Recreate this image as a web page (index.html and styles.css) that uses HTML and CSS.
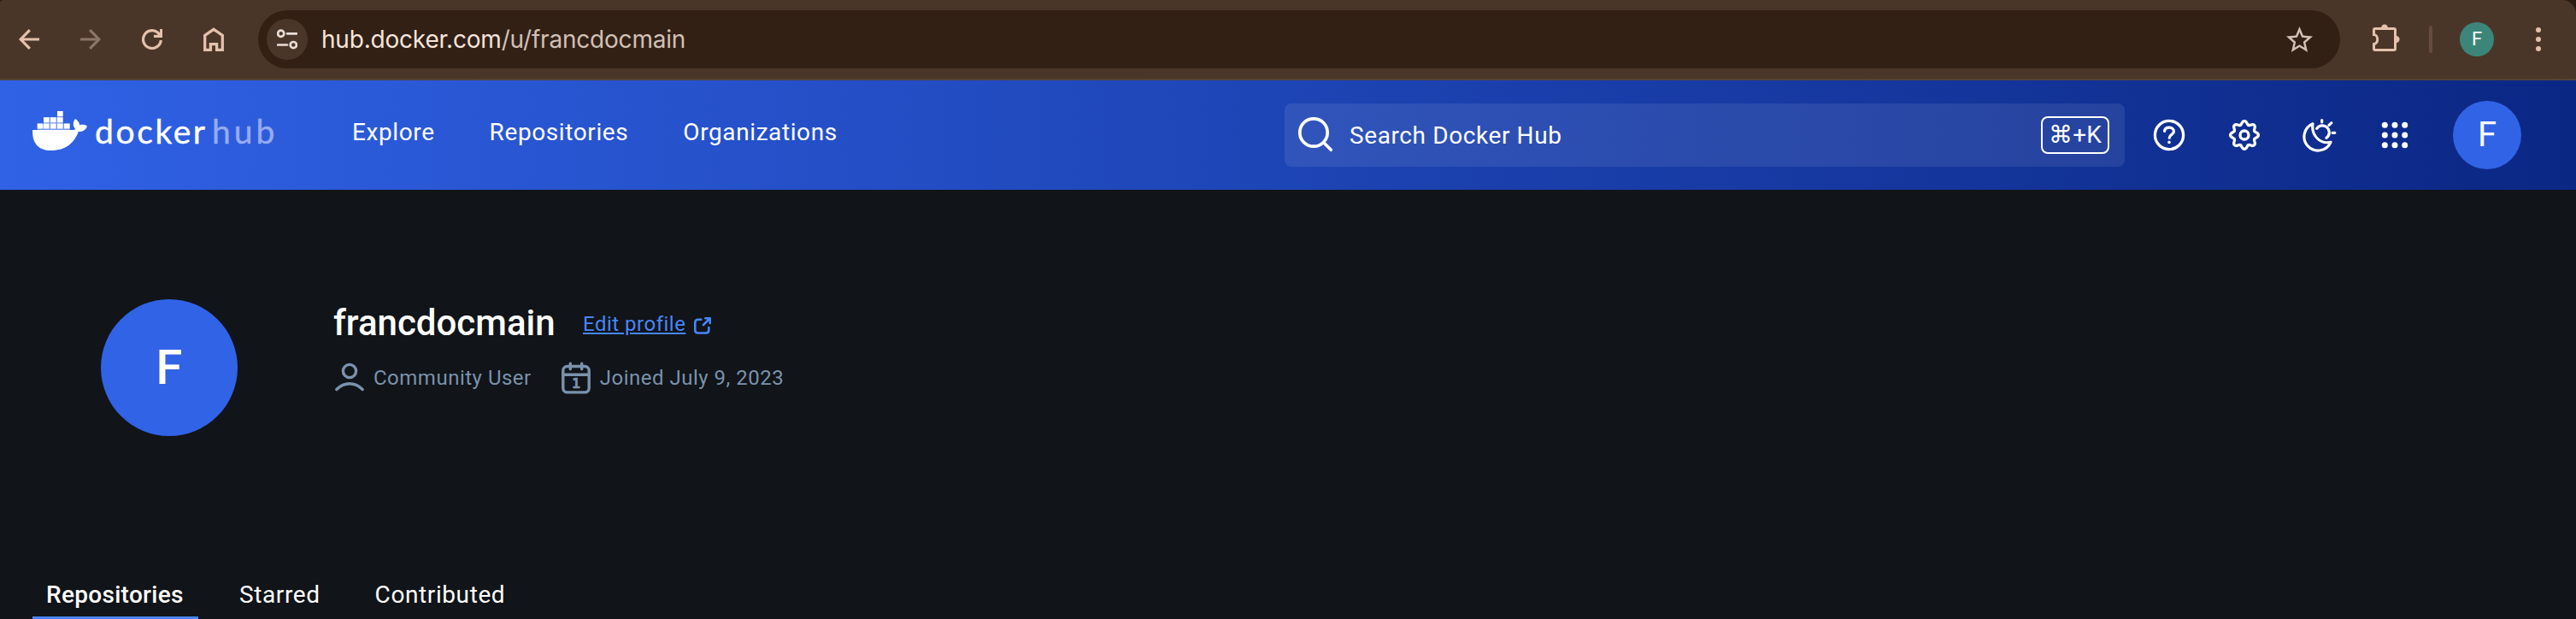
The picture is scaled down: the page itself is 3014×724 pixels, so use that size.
FILE: index.html
```html
<!DOCTYPE html>
<html lang="en">
<head>
<meta charset="utf-8">
<title>francdocmain | Docker Hub</title>
<link rel="stylesheet" href="styles.css">
</head>
<body>
<div class="browser">
  <div class="toolbar">
    <div class="nav-buttons">
      <svg class="icon" width="24" height="24" viewBox="0 0 24 24"><path d="M24 12H2.500M12.800 1.200 2.200 12l10.600 10.800" stroke-width="3.200"/></svg>
      <svg class="icon icon-dim" width="24" height="24" viewBox="0 0 24 24"><path d="M0 12h21.500M11.200 1.200 21.800 12 11.200 22.800" stroke-width="3.200"/></svg>
      <svg class="icon" width="24" height="24" viewBox="0 0 24 24"><path d="M22.300 13A10.400 10.400 0 1 1 18.500 4L22 7.500M22.600 0v8.300H14" stroke-width="3.200"/></svg>
      <svg class="icon" width="24" height="28" viewBox="0 0 24 28"><path d="M1.700 26.300V9.300L12 2.300l10.300 7v17h-6.700v-6.700H8.400v6.700z" stroke-width="3.300"/></svg>
    </div>
    <div class="address">
      <span class="site-info">
        <svg class="icon icon-light" width="24" height="24" viewBox="0 0 24 24" stroke-width="2.700"><circle cx="4.700" cy="5.300" r="3.600"/><path d="M12 5.300h11M1 18.500h11"/><circle cx="19.300" cy="18.600" r="3.600"/></svg>
      </span>
      <span class="url"><span class="host">hub.docker.com</span>/u/francdocmain</span>
      <svg class="star" width="31" height="30" viewBox="2 2 20 19" preserveAspectRatio="none"><path d="M22 9.240l-7.190-.620L12 2 9.190 8.630 2 9.240l5.460 4.730L5.820 21 12 17.270 18.180 21l-1.630-7.030L22 9.240zM12 15.400l-3.760 2.270 1-4.280-3.320-2.880 4.380-.380L12 6.100l1.710 4.040 4.380.380-3.320 2.880 1 4.280L12 15.400z"/></svg>
    </div>
    <svg class="icon puzzle" width="32" height="32" viewBox="0 0 32 32"><path d="M1.500 12.500V7q0-1.500 1.500-1.500h22q1.500 0 1.500 1.500v22q0 1.500-1.500 1.500H3q-1.500 0-1.500-1.500v-5.500A4.200 5.500 0 0 0 1.500 12.500z" stroke-width="3"/><path class="solid" d="M10 5a4 4.600 0 0 1 8 0zM27 13.800a4.600 4.200 0 0 1 0 8.400z"/></svg>
    <span class="divider"></span>
    <span class="chrome-avatar">F</span>
    <span class="kebab"><i></i><i></i><i></i></span>
  </div>
</div>

<header class="hub-header">
  <a class="brand">
    <svg class="whale" width="64" height="46" viewBox="0 0 64 46">
      <path class="cargo-gap" d="M29 0h6.700v7H29zM13 7h22.700v7.500H13zM5.700 14.500h38v8h-38z"/>
      <path d="M29 0h6.600v5.900H29zM13 7.300h6.600v5.900H13zM21 7.300h6.600v5.900H21zM29 7.300h6.600v5.900H29zM5.700 14.600h6.600v5.900H5.700zM13 14.600h6.600v5.900H13zM21 14.600h6.600v5.900H21zM29 14.600h6.600v5.900H29zM37 14.600h6.600v5.900H37z"/>
      <path d="M1 22h45c2.500 0 3.800-.400 4.400-1C47 18 47 12.500 50 9c2.500 1.500 5 4 5.200 7.200 3.300-1 6.800-.400 8.800 1.200-1.500 4.600-5 6.600-10.200 6.600C49 37 39 46 22 46 7 46 0 38 0 23q0-1 1-1z"/>
    </svg>
    <span class="word">docker</span><span class="word word-hub">hub</span>
  </a>
  <nav class="main-nav"><a>Explore</a><a>Repositories</a><a>Organizations</a></nav>
  <div class="search">
    <svg class="line" width="42" height="42" viewBox="0 0 42 42" stroke-width="3.700"><circle cx="18" cy="18" r="16.200"/><path d="m29.500 29.500 8.800 8.800"/></svg>
    <span class="search-text">Search Docker Hub</span>
    <kbd>⌘+K</kbd>
  </div>
  <div class="actions">
    <svg class="line" width="40" height="40" viewBox="-20 -20 40 40" stroke-width="3.300"><circle r="16.600"/><path d="M-5.400-4.600C-5.200-7.300-2.900-8.900 0-8.900 3.100-8.900 5.500-7 5.500-4.200 5.500-.600.200-.700.200 3.200"/><circle class="dot" cx="0" cy="8.400" r="1.800"/></svg>
    <svg class="line" width="40" height="40" viewBox="-20 -20 40 40" stroke-width="3.300">
      <defs><path id="tooth" d="M-4.820-11.640C-2.500-12.600-3.300-16.400 0-16.400S2.500-12.600 4.820-11.640"/></defs>
      <use href="#tooth"/><use href="#tooth" transform="rotate(45)"/><use href="#tooth" transform="rotate(90)"/><use href="#tooth" transform="rotate(135)"/><use href="#tooth" transform="rotate(180)"/><use href="#tooth" transform="rotate(225)"/><use href="#tooth" transform="rotate(270)"/><use href="#tooth" transform="rotate(315)"/>
      <circle r="5"/>
    </svg>
    <svg class="line" width="40" height="40" viewBox="0 0 40 40" stroke-width="3.200"><path d="M12 6.800A16.200 16.200 0 1 0 33 28.300C20 31 10 20 12 6.800zM16.700 12.300A8 8 0 1 1 28 23.300M22.700 2.600v2.200M31 8.400l2.800-2.600M35 17.300h2.800"/></svg>
    <svg class="dots" width="32" height="32" viewBox="-16 -16 32 32"><g><circle cx="-11.700" cy="-11.700" r="3.500"/><circle cy="-11.700" r="3.500"/><circle cx="11.700" cy="-11.700" r="3.500"/><circle cx="-11.700" r="3.500"/><circle r="3.500"/><circle cx="11.700" r="3.500"/><circle cx="-11.700" cy="11.700" r="3.500"/><circle cy="11.700" r="3.500"/><circle cx="11.700" cy="11.700" r="3.500"/></g></svg>
    <span class="user-avatar">F</span>
  </div>
</header>

<main class="page">
  <section class="profile">
    <div class="avatar">F</div>
    <div class="details">
      <div class="title-row">
        <h1>francdocmain</h1>
        <a class="edit"><span>Edit profile</span>
          <svg width="20" height="20" viewBox="0 0 20 20"><path d="M8.300 2.800H4.800q-3.500 0-3.500 3.400v9q0 3.300 3.500 3.300H14q3.300 0 3.300-3.300V12M11 9l7.500-7.500M13.300 1.300h5.500v5.600"/></svg>
        </a>
      </div>
      <div class="meta-row">
        <span class="meta"><svg class="meta-icon" width="36" height="36" viewBox="0 0 36 36"><circle cx="18" cy="10" r="7.600"/><path d="M2.800 31.500C12 22.500 24 22.500 33.200 31.500"/></svg><span class="member">Community User</span></span>
        <span class="meta"><svg class="meta-icon" width="36" height="38" viewBox="0 0 36 38"><rect x="2.800" y="5.500" width="30.400" height="30.400" rx="5"/><path d="M2.800 15.300h30.400M11.300 2.300v6.500M24.700 2.300v6.500"/><text x="18" y="31">1</text></svg><span>Joined July 9, 2023</span></span>
      </div>
    </div>
  </section>
  <nav class="tabs"><a class="tab active">Repositories</a><a class="tab starred">Starred</a><a class="tab contributed">Contributed</a></nav>
</main>
</body>
</html>
```

FILE: styles.css
```css
* { box-sizing: border-box; }
html, body { margin: 0; height: 724px; overflow: hidden; }
body {
  background: #111418;
  color: #fff;
  font-family: Roboto, "Liberation Sans", sans-serif;
  font-size: 28px;
  letter-spacing: 0.6px;
  -webkit-font-smoothing: antialiased;
}
svg { display: block; flex: none; fill: none; }

.browser { background: #2c1b10; }
.toolbar {
  display: flex;
  align-items: center;
  height: 94px;
  padding-left: 22px;
  background: #4a3628;
  border-bottom: 2px solid #544338;
  border-radius: 4px 16px 0 0;
}
.nav-buttons { display: flex; align-items: center; gap: 48px; width: 280px; }
.icon { stroke: #e3c1ac; }
.icon-dim { stroke: #8d7667; }
.icon-light { stroke: #eaddd5; stroke-linecap: round; }
.address {
  display: flex;
  align-items: center;
  width: 2436px;
  height: 68px;
  padding: 0 32px 0 10px;
  border-radius: 34px;
  background: #322015;
}
.site-info {
  display: flex;
  align-items: center;
  justify-content: center;
  width: 48px;
  height: 48px;
  border-radius: 50%;
  background: #4a3628;
}
.url {
  flex: 1;
  margin-left: 16px;
  color: #d1c0b6;
  font: 400 28px/40px Inter, "Liberation Sans", sans-serif;
  letter-spacing: -0.2px;
}
.host { color: #f4e4da; }
.star { fill: #d1c0b6; }
.puzzle { margin: -4px 0 0 38px; }
.puzzle .solid { fill: #e3c1ac; stroke: none; }
.divider { width: 4px; height: 32px; margin-left: 34px; border-radius: 2px; background: #654c3e; }
.chrome-avatar {
  width: 40px;
  height: 40px;
  margin-left: 32px;
  border-radius: 50%;
  background: #3b8679;
  font-size: 22px;
  line-height: 40px;
  text-align: center;
  letter-spacing: 0;
}
.kebab { display: flex; flex-direction: column; gap: 5px; margin-left: 49px; }
.kebab i { width: 6px; height: 6px; border-radius: 50%; background: #e3c1ac; }

.hub-header {
  display: flex;
  align-items: center;
  height: 128px;
  padding-left: 38px;
  background: linear-gradient(90deg, #3062e6, #0b2784);
}
.brand { display: flex; align-items: center; width: 374px; margin-top: -10px; }
.whale { fill: #fff; }
.cargo-gap { opacity: 0.35; }
.word {
  width: 138px;
  padding-left: 9px;
  font: 400 39px/46px Lato, sans-serif;
  letter-spacing: 2.6px;
  -webkit-text-stroke: 0.4px currentColor;
}
.word-hub { padding-left: 8px; color: #96abf0; letter-spacing: 4px; }
.main-nav { display: flex; gap: 64px; width: 1091px; margin-top: -7px; }
.search {
  display: flex;
  align-items: center;
  width: 983px;
  height: 74px;
  padding: 0 18px 0 16px;
  border-radius: 8px;
  background: rgba(255, 255, 255, 0.085);
}
.line { stroke: #fff; stroke-linecap: round; stroke-linejoin: round; }
.dot { fill: #fff; stroke: none; }
.search-text { flex: 1; margin-left: 18px; }
kbd {
  width: 80px;
  height: 44px;
  border: 2px solid #fff;
  border-radius: 8px;
  font: 400 28px/40px Roboto, "DejaVu Sans", sans-serif;
  letter-spacing: 0;
  text-align: center;
  white-space: nowrap;
}
.actions { display: flex; align-items: center; gap: 48px; margin-left: 32px; }
.dots { margin: 0 4px; fill: #fff; }
.user-avatar {
  width: 80px;
  height: 80px;
  border-radius: 50%;
  background: #3163e6;
  font-size: 40px;
  line-height: 80px;
  text-align: center;
  letter-spacing: 0;
}

.page { display: flex; flex-direction: column; height: 502px; }
.profile { display: flex; padding: 128px 0 0 118px; height: 444px; }
.avatar {
  width: 160px;
  height: 160px;
  border-radius: 50%;
  background: #3163e6;
  font-size: 56px;
  font-weight: 500;
  line-height: 160px;
  text-align: center;
  letter-spacing: 0;
}
.details { padding-left: 112px; }
.title-row { display: flex; align-items: center; height: 56px; }
h1 { width: 292px; margin: 0; font-size: 42px; font-weight: 500; line-height: 56px; letter-spacing: 0; }
.edit { display: flex; align-items: center; gap: 10px; height: 32px; margin-top: 2px; color: #4686fa; font-size: 24px; }
.edit span { letter-spacing: 0.5px; text-decoration: underline; }
.edit svg { margin-top: 4px; stroke: #4686fa; stroke-width: 2.6; stroke-linecap: round; stroke-linejoin: round; }
.meta-row { display: flex; align-items: center; gap: 33px; margin-top: 16px; color: #7a92ad; font-size: 24px; line-height: 40px; letter-spacing: 0.5px; }
.meta { display: flex; align-items: center; gap: 10px; }
.meta-icon { margin-left: 1px; stroke: #7a92ad; stroke-width: 3.4; stroke-linecap: round; }
.meta-icon text { fill: #7a92ad; stroke: #7a92ad; stroke-width: 0.6; font: 700 16px "DejaVu Sans Mono", monospace; text-anchor: middle; letter-spacing: 0; }

.tabs { display: flex; height: 58px; padding-left: 38px; }
.tab { height: 58px; padding: 0 16px; line-height: 59px; }
.active { width: 194px; font-weight: 500; border-bottom: 3px solid #4686fa; letter-spacing: 0.3px; }
.starred { margin-left: 32px; }
.contributed { margin-left: 32px; }
```
